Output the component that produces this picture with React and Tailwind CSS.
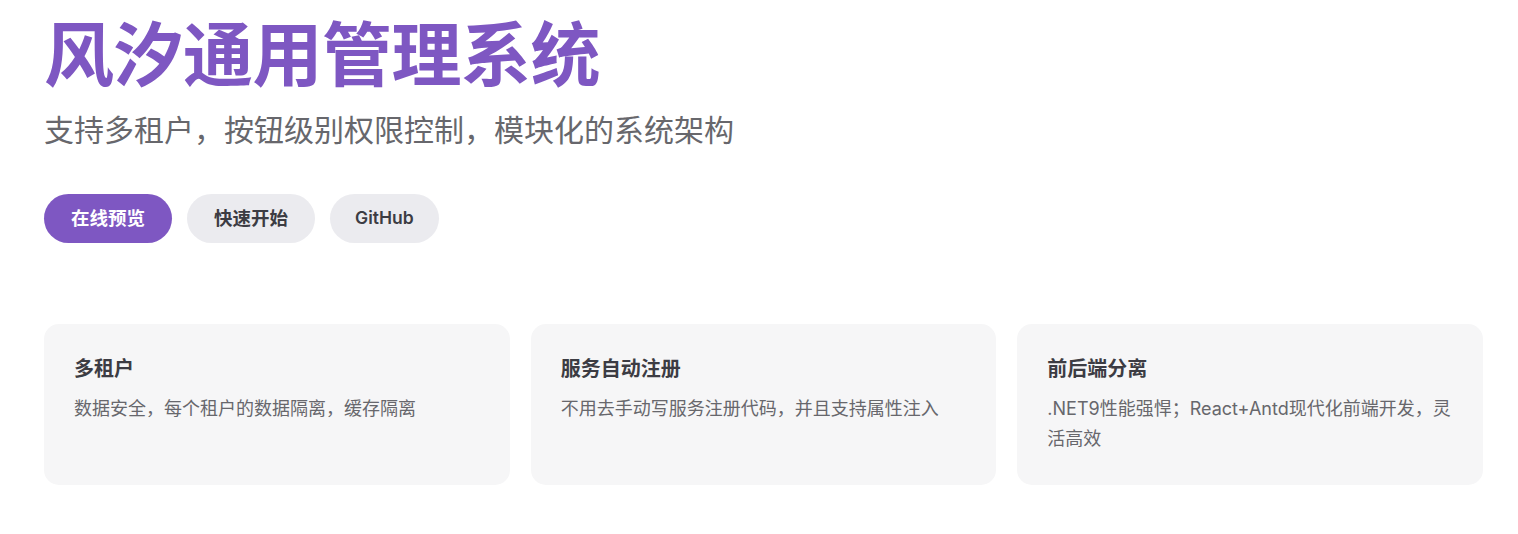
import React from 'react';

const features = [
  { title: '多租户', details: '数据安全，每个租户的数据隔离，缓存隔离' },
  { title: '服务自动注册', details: '不用去手动写服务注册代码，并且支持属性注入' },
  { title: '前后端分离', details: '.NET9性能强悍；React+Antd现代化前端开发，灵活高效' },
];

const font = "font-['Inter','Noto_Sans_CJK_SC',sans-serif]";

export default function App() {
  return (
    <div className={`min-h-screen bg-white pl-[44px] pr-[35px] pt-[16px] ${font}`}>
      {/* Hero */}
      <h1 className="text-[70px] leading-[80px] font-bold tracking-[-0.5px] text-[#7e57c2]">
        风汐通用管理系统
      </h1>
      <p className="pt-[12px] text-[30px] leading-[45px] font-normal text-[#67676c]">
        支持多租户，按钮级别权限控制，模块化的系统架构
      </p>
      <div className="flex gap-[15px] pt-[41px]">
        <a className="h-[49px] px-[27px] rounded-full bg-[#7e57c2] text-white text-[18.5px] font-semibold flex items-center">
          在线预览
        </a>
        <a className="h-[49px] px-[27px] rounded-full bg-[#ebebef] text-[#3c3c43] text-[18.5px] font-semibold flex items-center">
          快速开始
        </a>
        <a className="h-[49px] px-[25px] rounded-full bg-[#ebebef] text-[#3c3c43] text-[17.5px] font-semibold flex items-center">
          GitHub
        </a>
      </div>

      {/* Features */}
      <div className="mt-[81px] grid grid-cols-3 gap-[21px]">
        {features.map((f) => (
          <div key={f.title} className="rounded-[15px] bg-[#f6f6f7] p-[30px] min-h-[161px]">
            <h2 className="text-[20px] leading-[30px] font-semibold text-[#3c3c43]">{f.title}</h2>
            <p className="pt-[10px] text-[18px] leading-[30px] font-normal text-[#67676c]">{f.details}</p>
          </div>
        ))}
      </div>
    </div>
  );
}
